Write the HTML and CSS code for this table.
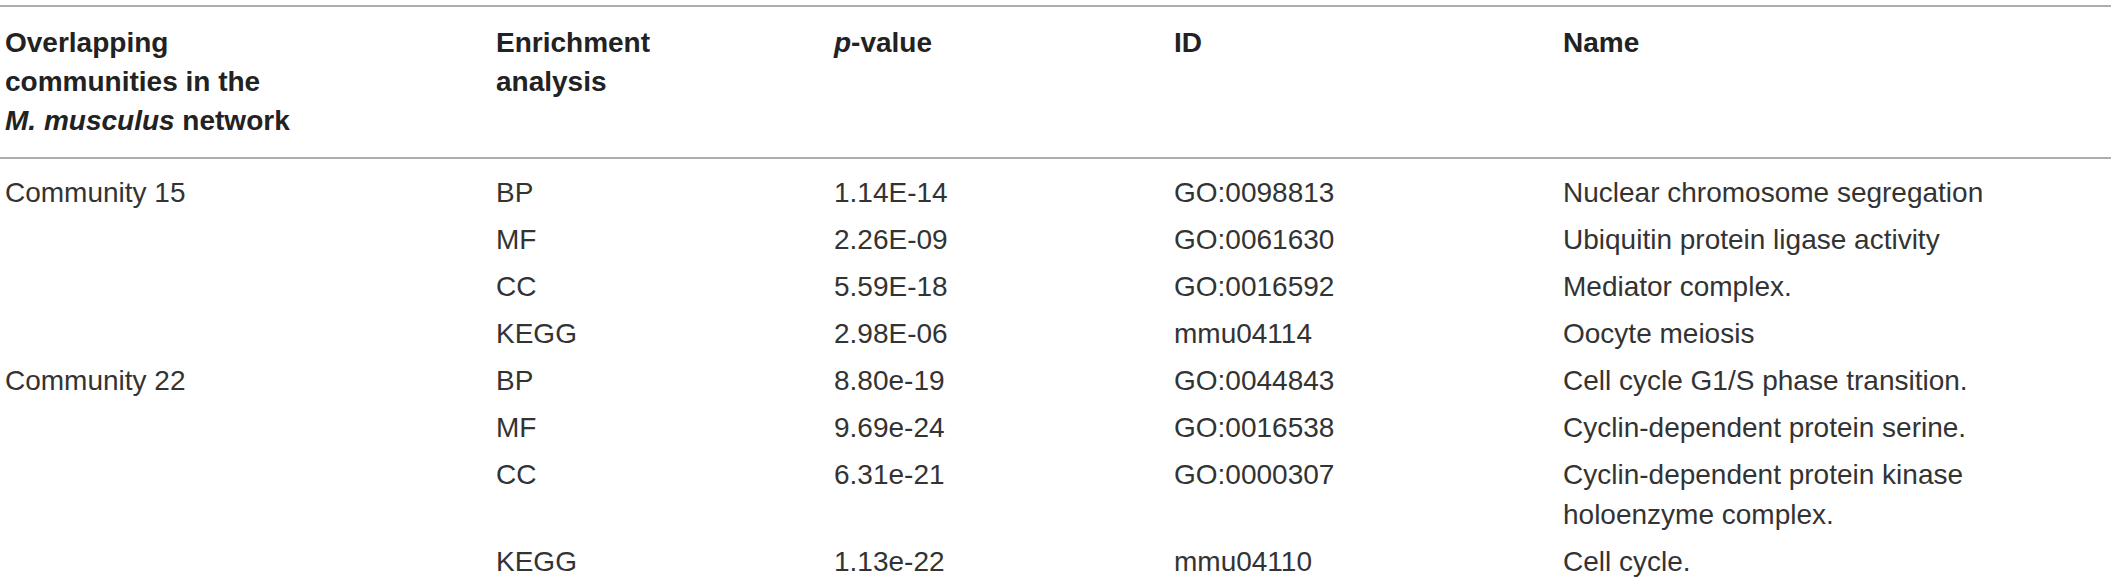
FILE: index.html
```html
<!DOCTYPE html>
<html lang="en">
<head>
<meta charset="utf-8">
<title>Overlapping communities</title>
<link rel="stylesheet" href="styles.css">
</head>
<body>
<table class="data">
  <colgroup>
    <col class="c1"><col class="c2"><col class="c3"><col class="c4"><col class="c5">
  </colgroup>
  <thead>
    <tr>
      <th>Overlapping<br>communities in the<br><i>M. musculus</i> network</th>
      <th>Enrichment<br>analysis</th>
      <th><i>p</i>-value</th>
      <th>ID</th>
      <th>Name</th>
    </tr>
  </thead>
  <tbody>
    <tr class="first"><td>Community 15</td><td>BP</td><td>1.14E-14</td><td>GO:0098813</td><td>Nuclear chromosome segregation</td></tr>
    <tr><td></td><td>MF</td><td>2.26E-09</td><td>GO:0061630</td><td>Ubiquitin protein ligase activity</td></tr>
    <tr><td></td><td>CC</td><td>5.59E-18</td><td>GO:0016592</td><td>Mediator complex.</td></tr>
    <tr><td></td><td>KEGG</td><td>2.98E-06</td><td>mmu04114</td><td>Oocyte meiosis</td></tr>
    <tr><td>Community 22</td><td>BP</td><td>8.80e-19</td><td>GO:0044843</td><td>Cell cycle G1/S phase transition.</td></tr>
    <tr><td></td><td>MF</td><td>9.69e-24</td><td>GO:0016538</td><td>Cyclin-dependent protein serine.</td></tr>
    <tr><td></td><td>CC</td><td>6.31e-21</td><td>GO:0000307</td><td>Cyclin-dependent protein kinase holoenzyme complex.</td></tr>
    <tr><td></td><td>KEGG</td><td>1.13e-22</td><td>mmu04110</td><td>Cell cycle.</td></tr>
  </tbody>
</table>
</body>
</html>
```

FILE: styles.css
```css
html, body {
  margin: 0;
  padding: 0;
  background: #ffffff;
}

body {
  padding-top: 5px;
  font-family: "Liberation Sans", Arial, Helvetica, sans-serif;
  color: #333333;
}

.data {
  width: 2111px;
  border-collapse: collapse;
  table-layout: fixed;
  font-size: 28px;
}

.c1 { width: 491px; }
.c2 { width: 338px; }
.c3 { width: 340px; }
.c4 { width: 389px; }
.c5 { width: 553px; }

.data thead tr {
  border-top: 2px solid #adadad;
  border-bottom: 2px solid #adadad;
}

.data th {
  text-align: left;
  vertical-align: top;
  font-weight: 700;
  color: #222222;
  line-height: 39px;
  padding: 16px 0 17px 5px;
}

.data td {
  vertical-align: top;
  font-weight: 400;
  line-height: 40px;
  padding: 3.5px 80px 3.5px 5px;
}

.data tr.first td {
  padding-top: 14px;
}
```
